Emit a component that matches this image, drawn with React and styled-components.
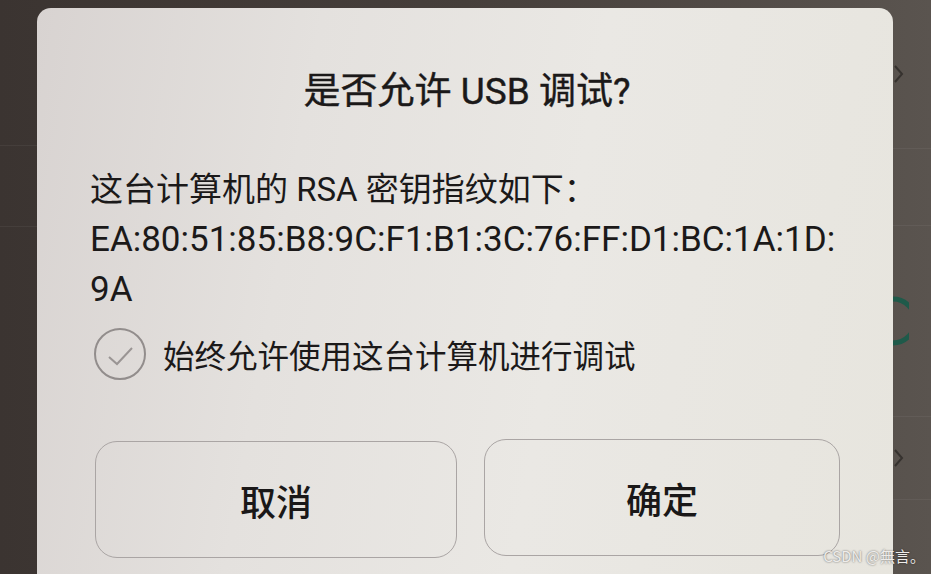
import React from 'react'
import styled, { createGlobalStyle } from 'styled-components'

const GlobalStyle = createGlobalStyle`
  html, body {
    margin: 0;
    padding: 0;
    background: #3e3734;
  }
  body {
    font-family: Roboto, "Noto Sans CJK SC", sans-serif;
  }
`

const Screen = styled.div`
  position: relative;
  display: flex;
  width: 931px;
  height: 574px;
  overflow: hidden;
  background: linear-gradient(90deg, #3b3431 0%, #463f3b 50%, #5a544f 100%);
`

const LeftEdge = styled.div`
  width: 37px;
  flex-shrink: 0;
  display: flex;
  flex-direction: column;
`

const EdgeRow = styled.div`
  height: ${p => p.h}px;
  flex-shrink: 0;
  border-bottom: 1px solid rgba(255, 255, 255, 0.05);
  display: flex;
  align-items: center;
  justify-content: ${p => (p.right ? 'flex-start' : 'flex-end')};
`

const RightEdge = styled.div`
  width: 38px;
  flex-shrink: 0;
  display: flex;
  flex-direction: column;
`

const Dialog = styled.div`
  width: 856px;
  flex-shrink: 0;
  margin-top: 8px;
  border-radius: 14px 14px 0 0;
  background: linear-gradient(100deg, #d8d3d1 0%, #e4e1de 30%, #eae8e4 60%, #e7e5de 100%);
  display: flex;
  flex-direction: column;
  color: #1b1919;
`

const Title = styled.div`
  margin-top: 59px;
  text-align: center;
  font-size: 37px;
  line-height: 50px;
  padding-left: 4px;
  -webkit-text-stroke: 0.4px #1b1919;
`

const Body = styled.div`
  margin-top: 48px;
  padding-left: 53px;
  padding-right: 20px;
`

const Line = styled.div`
  font-size: ${p => p.size || 33}px;
  line-height: 50px;
  white-space: nowrap;
`

const CheckRow = styled.div`
  margin-top: 14px;
  padding-left: 56px;
  display: flex;
  align-items: center;
  gap: 16px;
  height: 50px;
  font-size: 31.5px;
`

const Actions = styled.div`
  margin-top: 60px;
  padding: 0 53px 0 58px;
  display: grid;
  grid-template-columns: 362px 356px;
  column-gap: 27px;
`

const Button = styled.button`
  height: 117px;
  margin-top: ${p => p.offset || 0}px;
  border: 1.5px solid #aaa5a4;
  border-radius: 22px;
  background: transparent;
  font-family: Roboto, "Noto Sans CJK SC", sans-serif;
  font-size: 36px;
  font-weight: 500;
  color: #1a1818;
  display: flex;
  align-items: center;
  justify-content: center;
`

const Watermark = styled.div`
  position: absolute;
  right: 6px;
  bottom: 8px;
  font-family: "Noto Sans CJK SC", sans-serif;
  font-size: 15px;
  color: #eeecea;
  text-shadow: 0 0 2px rgba(0, 0, 0, 0.6);
`

const Chevron = () => (
  <svg width="12" height="20" viewBox="0 0 12 20">
    <path d="M2 2 L9 10 L2 18" fill="none" stroke="rgba(20,18,16,0.5)" strokeWidth="2" />
  </svg>
)

const GreenArc = () => (
  <svg width="16" height="50" viewBox="0 0 16 50">
    <path d="M0 3 A22 22 0 0 1 0 47" fill="none" stroke="#1f5a4a" strokeWidth="5" />
  </svg>
)

const CheckCircle = () => (
  <svg width="54" height="54" viewBox="0 0 54 54">
    <circle cx="27" cy="27" r="25" fill="none" stroke="#928d8c" strokeWidth="2" />
    <path d="M16 30 L24 37 L39 21" fill="none" stroke="#9a9594" strokeWidth="2" />
  </svg>
)

export default function App() {
  return (
    <>
      <GlobalStyle />
      <Screen>
        <LeftEdge>
          <EdgeRow h={145} />
          <EdgeRow h={80} />
          <EdgeRow h={349} />
        </LeftEdge>
        <Dialog>
          <Title>是否允许 USB 调试?</Title>
          <Body>
            <Line>这台计算机的 RSA 密钥指纹如下：</Line>
            <Line size={35}>EA:80:51:85:B8:9C:F1:B1:3C:76:FF:D1:BC:1A:1D:</Line>
            <Line size={35}>9A</Line>
          </Body>
          <CheckRow>
            <CheckCircle />
            <span>始终允许使用这台计算机进行调试</span>
          </CheckRow>
          <Actions>
            <Button offset={2}>取消</Button>
            <Button>确定</Button>
          </Actions>
        </Dialog>
        <RightEdge>
          <EdgeRow h={148} right>
            <Chevron />
          </EdgeRow>
          <EdgeRow h={76} right />
          <EdgeRow h={190} right>
            <GreenArc />
          </EdgeRow>
          <EdgeRow h={82} right>
            <Chevron />
          </EdgeRow>
          <EdgeRow h={78} right />
        </RightEdge>
        <Watermark>CSDN @無言。</Watermark>
      </Screen>
    </>
  )
}
